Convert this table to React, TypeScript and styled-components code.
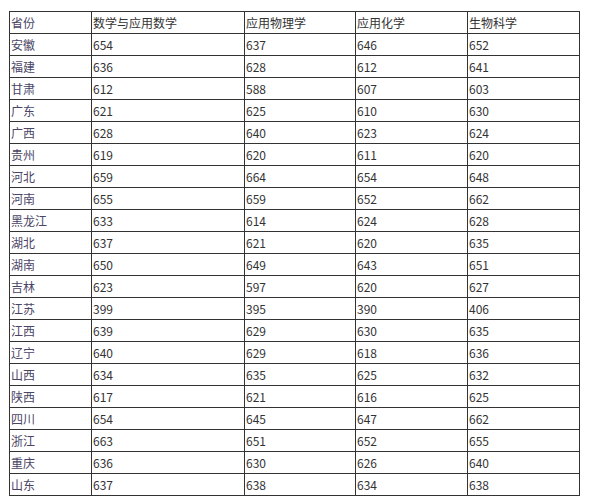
import styled, { createGlobalStyle } from "styled-components";

const GlobalStyle = createGlobalStyle`
  body {
    margin: 0;
    background: #fff;
    font-family: "Noto Sans CJK SC", "Noto Sans", sans-serif;
  }
`;

const Page = styled.div`
  padding: 11px 0 0 9px;
`;

const Table = styled.table`
  border-collapse: collapse;
  table-layout: fixed;
  width: 570px;
  font-size: 12px;
  color: #333;
`;

const Cell = styled.td<{ $name?: boolean }>`
  border: 1px solid #333;
  height: 21px;
  padding: 0 0 0 1px;
  line-height: 21px;
  white-space: nowrap;
  overflow: hidden;
  color: ${(p) => (p.$name ? "#4a4566" : "#333")};
`;

const widths = [82, 153, 111, 112, 112];
const head = ["省份", "数学与应用数学", "应用物理学", "应用化学", "生物科学"];

const rows: [string, number, number, number, number][] = [
  ["安徽", 654, 637, 646, 652],
  ["福建", 636, 628, 612, 641],
  ["甘肃", 612, 588, 607, 603],
  ["广东", 621, 625, 610, 630],
  ["广西", 628, 640, 623, 624],
  ["贵州", 619, 620, 611, 620],
  ["河北", 659, 664, 654, 648],
  ["河南", 655, 659, 652, 662],
  ["黑龙江", 633, 614, 624, 628],
  ["湖北", 637, 621, 620, 635],
  ["湖南", 650, 649, 643, 651],
  ["吉林", 623, 597, 620, 627],
  ["江苏", 399, 395, 390, 406],
  ["江西", 639, 629, 630, 635],
  ["辽宁", 640, 629, 618, 636],
  ["山西", 634, 635, 625, 632],
  ["陕西", 617, 621, 616, 625],
  ["四川", 654, 645, 647, 662],
  ["浙江", 663, 651, 652, 655],
  ["重庆", 636, 630, 626, 640],
  ["山东", 637, 638, 634, 638],
];

export default function App() {
  return (
    <Page>
      <GlobalStyle />
      <Table>
        <colgroup>
          {widths.map((w, i) => (
            <col key={i} style={{ width: w }} />
          ))}
        </colgroup>
        <tbody>
          <tr>
            {head.map((h, i) => (
              <Cell key={h} $name={i === 0}>
                {h}
              </Cell>
            ))}
          </tr>
          {rows.map(([name, ...scores]) => (
            <tr key={name}>
              <Cell $name>{name}</Cell>
              {scores.map((s, i) => (
                <Cell key={i}>{s}</Cell>
              ))}
            </tr>
          ))}
        </tbody>
      </Table>
    </Page>
  );
}
